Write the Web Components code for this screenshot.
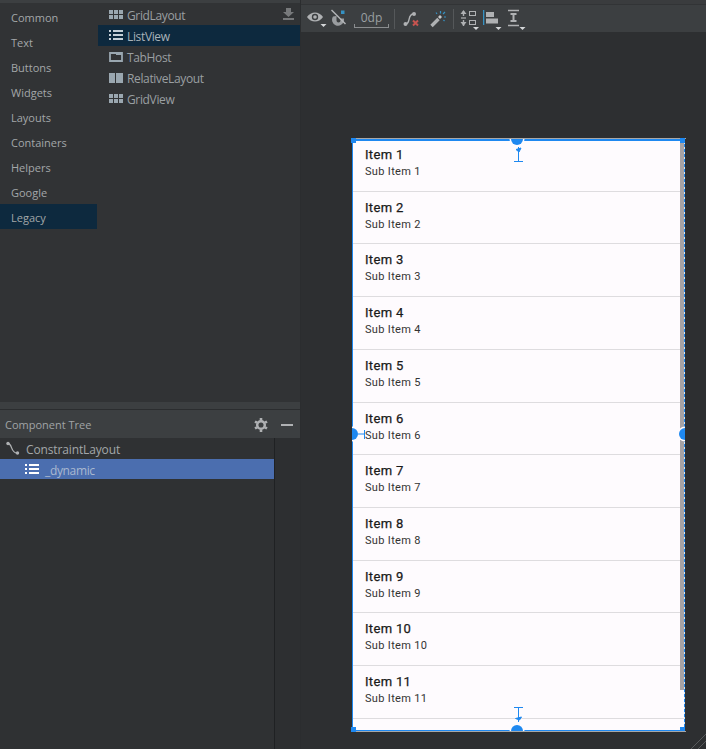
<!DOCTYPE html>
<html><head><meta charset="utf-8">
<style>
html,body{margin:0;padding:0;background:#2d2f31;}
body{width:706px;height:749px;overflow:hidden;font-family:"Open Sans","Noto Sans",sans-serif;}
</style></head><body>
<as-app></as-app>
<script>
const I={
grid:`<svg width="14" height="10" viewBox="0 0 14 10" fill="#9aa7b0"><rect x="0" y="0" width="4" height="4"/><rect x="5" y="0" width="4" height="4"/><rect x="10" y="0" width="4" height="4"/><rect x="0" y="5" width="4" height="4"/><rect x="5" y="5" width="4" height="4"/><rect x="10" y="5" width="4" height="4"/></svg>`,
list:`<svg width="14" height="11" viewBox="0 0 14 11" fill="#c6d0d8"><rect x="0" y="0" width="2" height="2"/><rect x="4" y="0" width="10" height="2"/><rect x="0" y="4" width="2" height="2"/><rect x="4" y="4" width="10" height="2"/><rect x="0" y="8" width="2" height="2"/><rect x="4" y="8" width="10" height="2"/></svg>`,
tab:`<svg width="14" height="10" viewBox="0 0 14 10"><path d="M1 1h12v8H1z" fill="none" stroke="#9aa7b0" stroke-width="1.800"/><path d="M1 1h6v2h6v-1H1z" fill="#9aa7b0"/></svg>`,
rel:`<svg width="14" height="10" viewBox="0 0 14 10" fill="#9aa7b0"><rect width="6" height="10"/><rect x="7" width="7" height="10"/></svg>`,
dl:`<svg width="11" height="12" viewBox="0 0 11 12" fill="#77797b"><path d="M3 0h5v4h3L5.500 9 0 4h3z"/><rect y="10" width="11" height="2"/></svg>`,
gear:`<svg width="14" height="14" viewBox="0 0 14 14" fill="none" stroke="#afb1b3"><circle cx="7" cy="7" r="3.800" stroke-width="2.500"/><path d="M7 0v2.500M7 11.500V14M1 3.500l2 1.200M11 9.300l2 1.200M1 10.500l2-1.200M11 4.700l2-1.200" stroke-width="2.600"/></svg>`,
cl:`<svg width="15" height="15" viewBox="0 0 15 15" fill="none"><path d="M2.500 2.500C7 2.500 5 12 11.500 12" stroke="#afb1b3" stroke-width="1.300"/><circle cx="2.500" cy="2.500" r="1.700" fill="#afb1b3"/><circle cx="12" cy="12" r="1.700" fill="#afb1b3"/></svg>`,
};
function def(name,html,init){customElements.define(name,class extends HTMLElement{constructor(){super();this.attachShadow({mode:'open'}).innerHTML=typeof html==='function'?html(this):html;}connectedCallback(){init&&init(this)}})}

def('as-cat',`<style>:host{display:flex;align-items:center;height:25px;padding-left:11px;font-size:11px;color:#a3a7a9;}
:host([sel]){background:#0d293e}
span{position:relative;top:1px}</style><span><slot></slot></span>`);

def('as-pal-item',`<style>:host{display:flex;align-items:center;height:21px;padding-left:11px;gap:4px;font-size:12px;color:#9a9fa2;letter-spacing:-.35px}
:host([sel]){background:#0d293e;color:#a9b2b8}
.i{display:flex;width:14px;justify-content:center}
.t{position:relative;top:1px}</style><span class="i"><slot name="i"></slot></span><span class="t"><slot></slot></span>`);

def('as-palette',`<style>:host{display:grid;grid-template-columns:97px 1fr;height:399px;background:#313335;column-gap:1px;position:relative}
.c,.l{padding-top:1px}
.d{position:absolute;right:6px;top:5px;display:flex}</style>
<div class="c"><slot name="cats"></slot></div><div class="l"><slot name="items"></slot></div>
<div class="d">${I.dl}</div>`);

def('as-tree',`<style>:host{display:block;height:339px;background:#2d2f31}
.h{height:28px;background:#3c3f41;display:flex;align-items:center;padding:1px 7px 0 5px;box-sizing:border-box;font-size:11px;color:#a0a4a6}
.h span{flex:1}
.m{width:12px;height:2px;background:#afb1b3;margin-left:13px}
.b{display:grid;grid-template-columns:275px 1fr;height:311px}
.t{border-right:1px solid #1f2123;font-size:12px;color:#a3a7a9;background:#2f3133;letter-spacing:-.13px}
.r{height:21px;display:flex;align-items:center;padding-left:5px;gap:5px}
.r span{position:relative;top:1px}
.r.s{height:20px;background:#4b6eaf;padding-left:25px;gap:6px;color:#a9b8cf;letter-spacing:-.35px}
</style>
<div class="h"><span>Component Tree</span>${I.gear}<i class="m"></i></div>
<div class="b"><div class="t"><div class="r">${I.cl.replace('width="15"','width="16"')}<span>ConstraintLayout</span></div>
<div class="r s">${I.list.replace(/#c6d0d8/,'#fff')}<span>_dynamic</span></div></div><div></div></div>`);

const caret=(x,y)=>`<path d="M${x} ${y}h6l-3 3z" fill="#d4d6d8"/>`;
def('as-toolbar',`<style>:host{display:flex;align-items:center;height:32px;box-sizing:border-box;background:#3c3f41;padding:5px 0 0 6px;flex:none;box-shadow:inset 0 4px 0 #3a3c3e,inset 0 5px 0 #323436}
svg{display:block;flex:none}
.s{width:1px;height:20px;background:#55585a}
.z{position:relative;width:35px;margin-left:5px;margin-right:5px;height:20px;font-size:12px;color:#9a9fa2;text-align:center;line-height:17px}
.z:after{content:"";position:absolute;left:0;right:0;bottom:1px;height:4px;border:1px solid #8a8d8f;border-top:0;box-sizing:border-box}
</style>
<svg width="20" height="20" viewBox="0 0 20 20"><path d="M0 8C4 2 12 2 16 8 12 14 4 14 0 8z" fill="#afb1b3"/><circle cx="8" cy="8" r="3.200" fill="#3c3f41"/><circle cx="8" cy="8" r="1.800" fill="#afb1b3"/>${caret(13.5,15)}</svg>
<svg style="margin-left:4px" width="18" height="20" viewBox="0 0 18 20" fill="none"><path d="M2 7.500a6 6 0 1 0 11 4V9.500H9.500v2a2 2 0 0 1-4 0V7z" fill="#9a9da0"/><rect x="10" y="1.500" width="3.500" height="3.500" fill="#3592c4"/><path d="M0.500 1l14 14" stroke="#b4b6b8" stroke-width="1.500"/></svg>
<div class="z">0dp</div><div class="s"></div>
<svg style="margin-left:8px" width="18" height="20" viewBox="0 0 18 20" fill="none"><path d="M2.500 15C8 15 4 5 10.500 5" stroke="#afb1b3" stroke-width="1.400"/><circle cx="2.500" cy="15" r="2" fill="#afb1b3"/><circle cx="11" cy="5" r="2" fill="#afb1b3"/><path d="M10 11.500l5 5M15 11.500l-5 5" stroke="#c75450" stroke-width="2"/></svg>
<svg style="margin-left:9px" width="16" height="20" viewBox="0 0 16 20" fill="none"><path d="M1.500 17l7-7" stroke="#afb1b3" stroke-width="3.400"/><path d="M8 8l2-2 2 2-2 2z" fill="#c8cacc"/><path d="M10.500 2v2.500M14 8h2M13 5l2-2M7 5L6 3.500M13.500 11l1 1" stroke="#3592c4" stroke-width="1.200"/></svg>
<div class="s" style="margin-left:7px"></div>
<svg style="margin-left:6px" width="22" height="24" viewBox="0 0 22 24" fill="none"><path d="M3.500 4v5M3.500 13v6" stroke="#afb1b3" stroke-width="1.400"/><path d="M.5 7l3-4 3 4zM.5 15l3 4 3-4z" fill="#afb1b3"/><path d="M1 11h5" stroke="#afb1b3" stroke-width="1.200"/><rect x="9.500" y="4.500" width="6" height="4" stroke="#afb1b3"/><rect x="9.500" y="13.500" width="6" height="4" stroke="#afb1b3"/>${caret(13,20)}</svg>
<svg style="margin-left:1px" width="19" height="24" viewBox="0 0 19 24"><rect x="0" y="3" width="1.300" height="15" fill="#3592c4"/><rect x="3" y="5" width="8" height="5" fill="#afb1b3"/><rect x="3" y="11.500" width="12" height="5" fill="#afb1b3"/>${caret(12.500,20)}</svg>
<svg style="margin-left:5px" width="20" height="24" viewBox="0 0 20 24" fill="none"><path d="M1 3.500h11M1 18.500h11" stroke="#afb1b3" stroke-width="1.400"/><rect x="3.500" y="6" width="6" height="2" fill="#afb1b3"/><rect x="3.500" y="13" width="6" height="2" fill="#afb1b3"/><rect x="5.500" y="8" width="2" height="5" fill="#afb1b3"/>${caret(12.500,20)}</svg>`);

def('list-row',el=>{const n=el.getAttribute('n');return `<style>:host{display:block;height:52.720px;box-sizing:border-box;border-bottom:1px solid #dedcdf;padding:8px 0 0 13px;font-family:Roboto,sans-serif;color:#1a1a1a}
.a{font-size:13px;line-height:16px;font-weight:400;letter-spacing:.32px;-webkit-text-stroke:.25px #1a1a1a}
.b{font-size:11px;line-height:17px;color:#333;letter-spacing:.33px}</style>
<div class="a">Item ${n}</div><div class="b">Sub Item ${n}</div>`});

def('as-phone',`<style>:host{display:block;position:relative;width:333px;height:592px;background:#fefbfe;}
.l{height:100%;overflow:hidden;margin-right:1px}
.ov{position:absolute;inset:0;overflow:hidden;pointer-events:none}
.out{position:absolute;inset:-1px;bottom:-1px;right:-1px;border:solid #a8a8a8;border-width:1px 0 1px 0;pointer-events:none}
.bt,.bb{position:absolute;left:0;right:0;height:1.500px;background:#1e88f0}
.bt{top:0}.bb{bottom:0}
.bl{position:absolute;left:0;top:0;bottom:0;width:1px;background:#1e88f0}
.sb{position:absolute;right:1px;top:0;width:4px;height:551px;background:#a6a3a6}
.db{position:absolute;right:0;top:0;bottom:0;width:1px;background:repeating-linear-gradient(#1e88f0 0 3px,#d8e8f8 3px 5px)}
.h{position:absolute;width:5px;height:5px;background:#1e88f0}
.c{position:absolute;background:#1e88f0;border-radius:50%;width:12px;height:12px;box-shadow:0 0 0 1.500px #fefbfe}
.sp{position:absolute}
</style>
<div class="l"><slot></slot></div>
<div class="out"></div>
<div class="ov">
<i class="sb"></i><i class="bl"></i><i class="bt"></i><i class="bb"></i><i class="db"></i>
<i class="c" style="left:159px;top:-6px"></i><i class="c" style="left:159px;bottom:-6px"></i>
<i class="c" style="left:-6px;top:289px"></i><i class="c" style="right:-6px;top:289px"></i>
<svg class="sp" style="left:161px;top:7px" width="11" height="17" viewBox="0 0 11 17" fill="none" stroke="#1e88f0"><path d="M5.500 1v15M1 15.500h9"/><path d="M3 3.500l5-1.500-2 4z" fill="#1e88f0"/></svg>
<svg class="sp" style="left:161px;bottom:9px" width="11" height="15" viewBox="0 0 11 15" fill="none" stroke="#1e88f0"><path d="M5.500 15V1M1 .5h9"/><path d="M2.500 11.500l6-1.500-2 3z" fill="#1e88f0"/></svg>
<svg class="sp" style="left:6px;top:291px" width="8" height="9" viewBox="0 0 8 9" fill="none" stroke="#1e88f0"><path d="M0 4h6.500M6.500 0v9"/></svg>
</div>
<i class="h" style="left:-1px;top:-1px"></i><i class="h" style="right:0;top:-1px"></i>
<i class="h" style="left:-1px;bottom:-1px"></i><i class="h" style="right:0;bottom:0;height:4px"></i>`);

def('as-canvas',`<style>:host{display:block;flex:1;position:relative;background:#2d2f31;padding:107px 0 0 51px;box-sizing:border-box;overflow:hidden}
.g{position:absolute;right:0;bottom:0}</style><slot></slot>
<svg class="g" width="16" height="16" viewBox="0 0 16 16" stroke="#57595b" fill="none"><path d="M1 16L16 1M8 16l8-8"/></svg>`);

def('as-app',`<style>:host{display:grid;grid-template-columns:300px 1fr;height:749px;column-gap:1px;background:#2b2d2f}
.L{display:flex;flex-direction:column;background:#2d2f31;height:749px}
.top{height:3px;background:#3c3f41;flex:none}
.sp{height:8px;background:#3c3f41;border-bottom:1px solid #2b2d2f;box-sizing:border-box;flex:none}
.R{display:flex;flex-direction:column;height:749px}
</style>
<div class="L"><div class="top"></div><slot name="pal"></slot><div class="sp"></div><slot name="tree"></slot></div>
<div class="R"><slot name="tb"></slot><slot name="canvas"></slot></div>`);

const app=document.querySelector('as-app');
const cats=['Common','Text','Buttons','Widgets','Layouts','Containers','Helpers','Google','Legacy'];
const items=[['GridLayout','grid'],['ListView','list',1],['TabHost','tab'],['RelativeLayout','rel'],['GridView','grid']];
let rows='';for(let i=1;i<=11;i++)rows+=`<list-row n="${i}"></list-row>`;
app.innerHTML=`<as-palette slot="pal">
${cats.map(c=>`<as-cat slot="cats" ${c=='Legacy'?'sel':''}>${c}</as-cat>`).join('')}
${items.map(([t,i,s])=>`<as-pal-item slot="items" ${s?'sel':''}><span slot="i" style="display:flex">${I[i]}</span>${t}</as-pal-item>`).join('')}
</as-palette>
<as-tree slot="tree"></as-tree>
<as-toolbar slot="tb"></as-toolbar>
<as-canvas slot="canvas"><as-phone>${rows}</as-phone></as-canvas>`;
</script>
</body></html>
